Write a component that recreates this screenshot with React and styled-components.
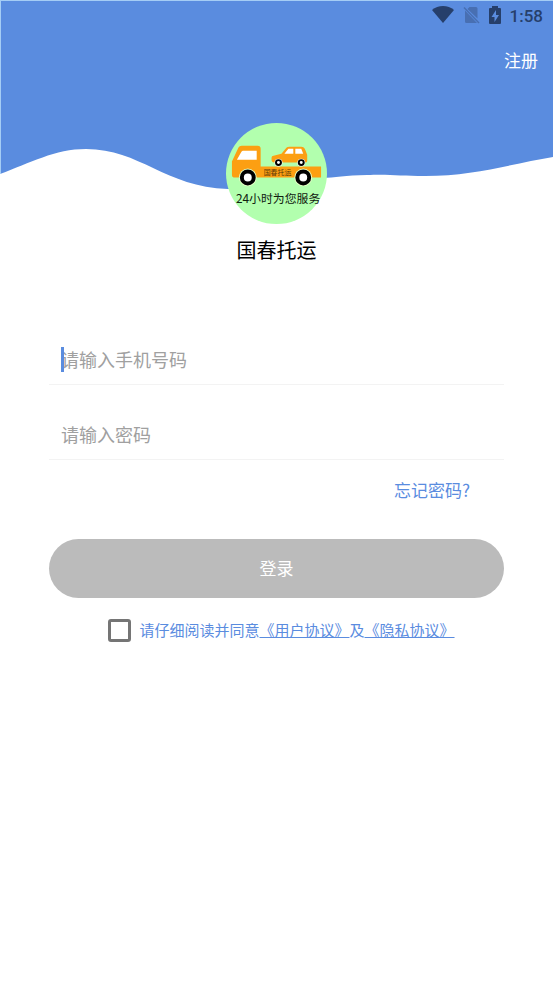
import React, { useState } from 'react';
import styled, { createGlobalStyle } from 'styled-components';

export default function App() {
  const [phone, setPhone] = useState('');
  const [password, setPassword] = useState('');
  const [agreed, setAgreed] = useState(false);

  const handleSubmit = (e) => {
    e.preventDefault();
  };

  return (
    <Page>
      <GlobalStyle />
      <Header>
        <Wave />
        <StatusBar>
          <WifiIcon />
          <NoSimIcon />
          <BatteryIcon />
          <Clock>1:58</Clock>
        </StatusBar>
        <Nav>
          <RegisterLink href="#register">注册</RegisterLink>
        </Nav>
        <Profile>
          <Logo />
          <AppName>国春托运</AppName>
        </Profile>
      </Header>

      <Form onSubmit={handleSubmit}>
        <Field>
          {phone === '' && <Caret />}
          <Input
            type="tel"
            aria-label="请输入手机号码"
            placeholder="请输入手机号码"
            value={phone}
            onChange={(e) => setPhone(e.target.value)}
          />
        </Field>
        <Field>
          <Input
            type="password"
            aria-label="请输入密码"
            placeholder="请输入密码"
            value={password}
            onChange={(e) => setPassword(e.target.value)}
          />
        </Field>
        <ForgotRow>
          <ForgotLink href="#forgot">忘记密码?</ForgotLink>
        </ForgotRow>
        <LoginButton type="submit" $active={agreed}>登录</LoginButton>
        <Agreement>
          <Checkbox
            id="agree"
            type="checkbox"
            checked={agreed}
            onChange={(e) => setAgreed(e.target.checked)}
          />
          <AgreementText htmlFor="agree">
            请仔细阅读并同意
            <TermsLink href="#terms">《用户协议》</TermsLink>
            及
            <TermsLink href="#privacy">《隐私协议》</TermsLink>
          </AgreementText>
        </Agreement>
      </Form>
    </Page>
  );
}

function Wave() {
  return (
    <WaveSvg viewBox="0 0 553 190" preserveAspectRatio="none" aria-hidden="true">
      <path
        fill="#5a8cdf"
        d="M0 0H553V157C515 163 475 176 425 176C400 176 390 174 367 175C345 175 335 178 322 178C290 182 260 189 228 189C165 187 140 149 86 149C55 149 30 163 0 174Z"
      />
      <path fill="#a5cdf5" d="M0 0H553V1H1V174H0Z" />
    </WaveSvg>
  );
}

function WifiIcon() {
  return (
    <svg width="22" height="18" viewBox="0 0 22 18" aria-hidden="true">
      <path fill="#263f6b" d="M11 17L0 4C3 1.400 7 0 11 0S19 1.400 22 4Z" />
    </svg>
  );
}

function NoSimIcon() {
  return (
    <svg width="17" height="18" viewBox="0 0 17 18" aria-hidden="true">
      <path fill="#486fb2" d="M6.500 1H13Q14.500 1 14.500 2.500V12.500L4.500 3ZM2 4.500L14 17H3.500Q2 17 2 15.500Z" />
      <path stroke="#486fb2" strokeWidth="1.500" d="M1 1.500L16 17" />
    </svg>
  );
}

function BatteryIcon() {
  return (
    <svg width="12" height="18" viewBox="0 0 12 18" aria-hidden="true">
      <path
        fill="#263f6b"
        fillRule="evenodd"
        d="M3 0H9V2H11Q12 2 12 3V17Q12 18 11 18H1Q0 18 0 17V3Q0 2 1 2H3ZM7 4L2.500 11H5.500V16L10 9H7Z"
      />
    </svg>
  );
}

function Logo() {
  return (
    <LogoSvg viewBox="0 0 102 102" role="img" aria-label="国春托运">
      <circle cx="51" cy="51" r="51" fill="#b2ffae" />
      <path
        fill="#fc9f12"
        d="M16 23H32Q35 23 35 26V44H96V55H8Q6 55 6 52V39L12 26Q13 23 16 23Z"
      />
      <path fill="#fff" d="M17 28H31V37H11L15 30Q16 28 17 28Z" />
      <path
        fill="#fc9f12"
        d="M46 35Q46 33 48 33L56 31L61 25Q62 24 64 24H76Q79 24 80 27L82 32V38Q82 40 80 40H50Q46 40 46 37Z"
      />
      <path fill="#fff" d="M59 31L63 26H68V31ZM70 26H76L78 31H70Z" />
      <circle cx="53" cy="40" r="4" fill="#fff" />
      <circle cx="53" cy="40" r="2.500" fill="#fff" stroke="#000" strokeWidth="2" />
      <circle cx="76" cy="40" r="4" fill="#fff" />
      <circle cx="76" cy="40" r="2.500" fill="#fff" stroke="#000" strokeWidth="2" />
      <circle cx="22" cy="55" r="9" fill="#e4ffc4" />
      <circle cx="22" cy="55" r="6" fill="#fff" stroke="#000" strokeWidth="4" />
      <circle cx="78" cy="55" r="9" fill="#e4ffc4" />
      <circle cx="78" cy="55" r="6" fill="#fff" stroke="#000" strokeWidth="4" />
      <text x="38" y="53" fontSize="7" fill="#5b3a08">国春托运</text>
      <text x="10" y="81" fontSize="12" fill="#10200f">24小时为您服务</text>
    </LogoSvg>
  );
}

const GlobalStyle = createGlobalStyle`
  * {
    box-sizing: border-box;
  }

  body {
    margin: 0;
    background: #ffffff;
  }

  body, input, button {
    font-family: "Noto Sans CJK SC", "Noto Sans", sans-serif;
  }

  a {
    color: #5a8cdf;
    text-decoration: none;
  }
`;

const Page = styled.div`
  min-height: 100vh;
  background: #ffffff;
`;

const Header = styled.header`
  position: relative;
  z-index: 0;
`;

const WaveSvg = styled.svg`
  position: absolute;
  z-index: -1;
  top: 0;
  left: 0;
  width: 100%;
  height: 190px;
`;

const StatusBar = styled.div`
  display: flex;
  justify-content: flex-end;
  align-items: center;
  height: 30px;
  padding: 0 10px;
  gap: 9px;
`;

const Clock = styled.span`
  font-family: Roboto, sans-serif;
  font-size: 17px;
  font-weight: 500;
  line-height: 20px;
  padding-top: 2px;
  color: #263f6b;
`;

const Nav = styled.nav`
  display: flex;
  justify-content: flex-end;
  align-items: center;
  height: 60px;
  padding: 0 15px;
`;

const RegisterLink = styled.a`
  font-size: 17px;
  line-height: 24px;
  color: #ffffff;
`;

const Profile = styled.div`
  display: flex;
  flex-direction: column;
  align-items: center;
  gap: 12px;
  padding-top: 33px;
`;

const LogoSvg = styled.svg`
  width: 101px;
  height: 101px;
  font-family: "Noto Sans CJK SC", sans-serif;
`;

const AppName = styled.h1`
  margin: 0;
  font-size: 20px;
  font-weight: 400;
  line-height: 28px;
  color: #000000;
`;

const Form = styled.form`
  display: flex;
  flex-direction: column;
  padding: 71px 49px 0;
`;

const Field = styled.div`
  position: relative;
  height: 50px;
  margin-bottom: 25px;
  border-bottom: 1px solid #f3f3f3;
`;

const Input = styled.input`
  width: 100%;
  height: 100%;
  padding: 0 12px 2px;
  border: 0;
  outline: 0;
  font-size: 18px;
  color: #333333;
  background: transparent;

  &::placeholder {
    color: #a0a0a0;
    opacity: 1;
  }
`;

const Caret = styled.span`
  position: absolute;
  top: 12px;
  left: 12px;
  width: 3px;
  height: 25px;
  background: #5a8cdf;
`;

const ForgotRow = styled.div`
  display: flex;
  justify-content: flex-end;
  padding: 0 34px;
  margin-top: -7px;
`;

const ForgotLink = styled.a`
  font-size: 17px;
  line-height: 24px;
`;

const LoginButton = styled.button`
  height: 59px;
  margin-top: 37px;
  padding: 0 0 2px;
  border: 0;
  border-radius: 30px;
  font-size: 17px;
  color: #ffffff;
  background: ${({ $active }) => ($active ? '#5a8cdf' : '#bbbbbb')};
`;

const Agreement = styled.div`
  display: flex;
  justify-content: center;
  align-items: center;
  gap: 8px;
  margin-top: 20px;
  padding-left: 10px;
`;

const Checkbox = styled.input`
  appearance: none;
  flex: none;
  width: 23px;
  height: 23px;
  margin: 0;
  border: 3px solid #757575;
  border-radius: 3px;

  &:checked {
    background: #5a8cdf;
  }
`;

const AgreementText = styled.label`
  font-size: 15px;
  line-height: 24px;
  color: #5a8cdf;
`;

const TermsLink = styled.a`
  text-decoration: underline;
  text-decoration-thickness: 1px;
`;
